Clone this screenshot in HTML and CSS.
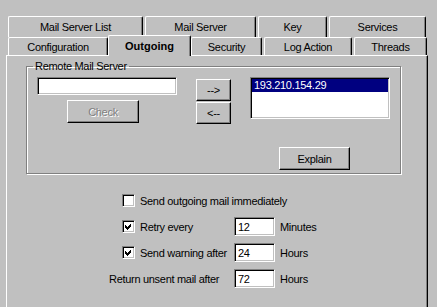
FILE: index.html
```html
<!DOCTYPE html>
<html lang="en">
<head>
    <meta charset="UTF-8">
    <meta name="viewport" content="width=device-width, initial-scale=1.0">
    <title>Outgoing</title>
    <link rel="stylesheet" href="styles.css">
</head>
<body>
    <div class="tabs">
        <div class="tab-row back">
            <div class="tab tab-list">Mail Server List</div>
            <div class="tab tab-server">Mail Server</div>
            <div class="tab tab-key">Key</div>
            <div class="tab tab-services">Services</div>
        </div>
        <div class="tab-row front">
            <div class="tab tab-config">Configuration</div>
            <div class="tab tab-outgoing active">Outgoing</div>
            <div class="tab tab-security">Security</div>
            <div class="tab tab-log">Log Action</div>
            <div class="tab tab-threads">Threads</div>
        </div>
    </div>

    <div class="panel">
        <fieldset class="group">
            <legend>Remote Mail Server</legend>
            <div class="server-row">
                <div class="server-col">
                    <input type="text" class="field server-field" value="">
                    <button type="button" class="btn check-btn" disabled>Check</button>
                </div>
                <div class="arrows">
                    <button type="button" class="btn arrow-btn">--&gt;</button>
                    <button type="button" class="btn arrow-btn">&lt;--</button>
                </div>
                <div class="list">
                    <div class="list-item selected">193.210.154.29</div>
                </div>
            </div>
            <button type="button" class="btn explain-btn">Explain</button>
        </fieldset>

        <div class="options">
            <label class="check full">
                <span class="box"></span>
                Send outgoing mail immediately
            </label>

            <label class="check">
                <span class="box">
                    <svg width="7" height="7" viewBox="0 0 7 7"><path d="M0 2 L2 4 L6 0 L6 3 L2 7 L0 5 Z" fill="#000" shape-rendering="crispEdges"/></svg>
                </span>
                Retry every
            </label>
            <input type="text" class="field num" value="12">
            <span class="unit">Minutes</span>

            <label class="check">
                <span class="box">
                    <svg width="7" height="7" viewBox="0 0 7 7"><path d="M0 2 L2 4 L6 0 L6 3 L2 7 L0 5 Z" fill="#000" shape-rendering="crispEdges"/></svg>
                </span>
                Send warning after
            </label>
            <input type="text" class="field num" value="24">
            <span class="unit">Hours</span>

            <span class="plain">Return unsent mail after</span>
            <input type="text" class="field num" value="72">
            <span class="unit">Hours</span>
        </div>
    </div>
</body>
</html>
```

FILE: styles.css
```css
* {
    box-sizing: border-box;
}

body {
    margin: 0;
    width: 437px;
    height: 307px;
    overflow: hidden;
    background-color: #c0c0c0;
    font-family: "Liberation Sans", Arial, sans-serif;
    font-size: 11px;
    letter-spacing: -0.3px;
    color: #000;
}

/* tabs */
.tabs {
    padding: 16px 0 0 8px;
}
.tab-row {
    display: flex;
    gap: 2px;
}
.tab {
    display: flex;
    align-items: center;
    justify-content: center;
    background-color: #c0c0c0;
    border-top: 1px solid #fff;
    border-left: 1px solid #fff;
    border-right: 1px solid #000;
    border-radius: 2px 2px 0 0;
    box-shadow: inset -1px 0 0 #808080;
}
.tab-row.back .tab {
    height: 21px;
    padding-bottom: 1px;
}
.tab-row.front {
    height: 18px;
    align-items: flex-end;
}
.tab-row.front .tab {
    height: 18px;
}
.tab-row.front .tab.active {
    position: relative;
    z-index: 1;
    height: 21px;
    margin: 0 -2px -1px;
    font-weight: bold;
    letter-spacing: 0;
}

.tab-list { width: 135px; }
.tab-server { width: 111px; }
.tab-key { width: 69px; }
.tab-services { width: 97px; }
.tab-config { width: 100px; }
.tab-outgoing { width: 83px; }
.tab-security { width: 71px; }
.tab-log { width: 88px; }
.tab-threads { width: 73px; }

/* page */
.panel {
    margin-left: 6px;
    width: 422px;
    height: 260px;
    border-top: 1px solid #fff;
    border-left: 1px solid #fff;
    border-right: 1px solid #000;
    box-shadow: inset -1px 0 0 #808080;
}

.group {
    margin: 4px 0 0 19px;
    padding: 4px 0 3px 10px;
    width: 375px;
    min-width: 0;
    border: 1px solid #808080;
    box-shadow: inset 1px 1px 0 #fff, 1px 1px 0 #fff;
}
.group legend {
    margin-left: -4px;
    padding: 0 2px;
    line-height: 13px;
}

.server-row {
    display: flex;
    align-items: flex-start;
    gap: 19px;
}
.server-col {
    width: 140px;
}
.server-field {
    display: block;
    width: 140px;
    height: 18px;
    margin-top: 3px;
}
.check-btn {
    margin: 5px 0 0 30px;
    width: 72px;
    height: 23px;
}
.arrows {
    display: flex;
    flex-direction: column;
    gap: 1px;
    margin-top: 2px;
}
.arrow-btn {
    width: 35px;
    height: 22px;
}
.list {
    width: 140px;
    height: 42px;
    background-color: #fff;
    border: 1px solid;
    border-color: #808080 #fff #fff #808080;
    box-shadow: inset 1px 1px 0 #000, inset -1px -1px 0 #c0c0c0;
    padding: 1px;
}
.list-item {
    height: 13px;
    line-height: 13px;
    padding-left: 2px;
}
.list-item.selected {
    background-color: #000080;
    color: #fff;
}
.explain-btn {
    display: block;
    margin: 23px 0 0 242px;
    width: 71px;
    height: 23px;
}

/* controls */
.btn {
    padding: 0;
    font: inherit;
    letter-spacing: inherit;
    color: #000;
    background-color: #c0c0c0;
    border: 1px solid;
    border-color: #fff #000 #000 #fff;
    box-shadow: inset -1px -1px 0 #808080;
    border-radius: 0;
}
.btn:disabled {
    color: #808080;
    text-shadow: 1px 1px 0 #fff;
}
.field {
    margin: 0;
    padding: 0 2px;
    font: inherit;
    letter-spacing: inherit;
    color: #000;
    background-color: #fff;
    border: 1px solid;
    border-color: #808080 #fff #fff #808080;
    box-shadow: inset 1px 1px 0 #000, inset -1px -1px 0 #c0c0c0;
    border-radius: 0;
    outline: none;
}

.options {
    display: grid;
    grid-template-columns: 125px 41px auto;
    grid-auto-rows: 19px;
    row-gap: 7px;
    margin: 17px 0 0 102px;
}
.check {
    display: flex;
    align-items: center;
    padding-left: 13px;
}
.check.full {
    grid-column: 1 / -1;
}
.box {
    display: flex;
    align-items: center;
    justify-content: center;
    width: 13px;
    height: 13px;
    margin-right: 5px;
    background-color: #fff;
    border: 1px solid;
    border-color: #808080 #fff #fff #808080;
    box-shadow: inset 1px 1px 0 #000, inset -1px -1px 0 #c0c0c0;
}
.num {
    width: 41px;
    height: 19px;
    padding-left: 3px;
}
.plain {
    display: flex;
    align-items: center;
}
.unit {
    display: flex;
    align-items: center;
    padding-left: 5px;
}
```
